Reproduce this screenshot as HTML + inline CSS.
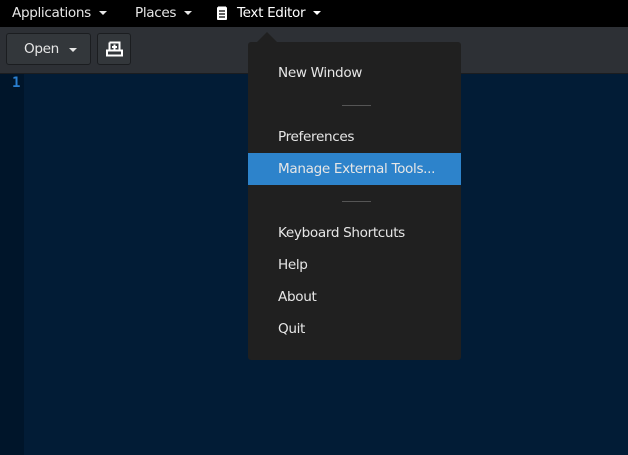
<!DOCTYPE html>
<html><head><style>
body{margin:0;width:628px;height:455px;overflow:hidden;font-family:"DejaVu Sans","Liberation Sans",sans-serif;background:#021c36;position:relative;letter-spacing:-0.35px}
.top{position:absolute;left:0;top:0;width:628px;height:27px;background:#000;color:#e6e6e6;font-size:13.6px}
.top span{position:absolute;top:5px}
.tri{display:inline-block;width:0;height:0;border-left:4px solid transparent;border-right:4px solid transparent;border-top:4px solid #e6e6e6;vertical-align:middle;margin-left:8px}
.tb{position:absolute;left:0;top:27px;width:628px;height:46px;background:#2d3035;border-bottom:1px solid #1b1d20}
.btn{position:absolute;top:6px;height:32px;border:1px solid #1b1d20;border-radius:3px;background:#33373b;box-sizing:border-box;color:#e6e6e6;font-size:13.6px}
.gut{position:absolute;left:0;top:74px;width:24px;height:381px;background:#00152a}
.ln{position:absolute;left:12px;top:75px;color:#2a7fd0;font-weight:bold;font-size:14px;font-family:"DejaVu Sans Mono",monospace}
.menu{position:absolute;left:248px;top:42px;width:213px;height:318px;background:#202020;border-radius:3px;color:#e6e6e6;font-size:13.6px}
.it{position:absolute;left:30px}
.sep{position:absolute;left:94px;width:29px;height:1px;background:#555}
</style></head><body>
<div class="top">
<span style="left:12px">Applications<i class="tri"></i></span>
<span style="left:135px">Places<i class="tri"></i></span>
<svg style="position:absolute;left:216px;top:6px" width="12" height="15" viewBox="0 0 12 15"><rect x="1" y="1" width="10" height="13" rx="1" fill="#fff"/><path d="M3 5h6M3 8h6M3 11h6" stroke="#000" stroke-width="1.3"/><path d="M3 1v-1M5 1v-1M7 1v-1M9 1v-1" stroke="#fff"/></svg>
<span style="left:237px;color:#fff">Text Editor<i class="tri" style="border-top-color:#fff"></i></span>
</div>
<div class="tb">
<div class="btn" style="left:6px;width:85px"><span style="position:absolute;left:17px;top:7px">Open</span><i class="tri" style="position:absolute;left:62px;top:14px;margin:0"></i></div>
<div class="btn" style="left:97px;width:34px"><svg style="position:absolute;left:8px;top:7px" width="17" height="16" viewBox="0 0 17 16"><path d="M3.5 1.5h10v8M3.5 1.5v8M1 9.5h15v5H1z" fill="none" stroke="#fff" stroke-width="2"/><path d="M8.5 3.5v5M6 6h5" stroke="#fff" stroke-width="2"/></svg></div>
</div>
<div class="gut"></div>
<div class="ln">1</div>
<div style="position:absolute;left:257px;top:32px;width:0;height:0;border-left:10px solid transparent;border-right:10px solid transparent;border-bottom:10px solid #202020"></div>
<div class="menu">
<div class="it" style="top:23px">New Window</div>
<div class="sep" style="top:63px"></div>
<div class="it" style="top:87px">Preferences</div>
<div style="position:absolute;left:0;top:111px;width:213px;height:32px;background:#2d83cb"></div>
<div class="it" style="top:119px">Manage External Tools...</div>
<div class="sep" style="top:159px"></div>
<div class="it" style="top:183px">Keyboard Shortcuts</div>
<div class="it" style="top:215px">Help</div>
<div class="it" style="top:247px">About</div>
<div class="it" style="top:279px">Quit</div>
</div>
</body></html>
